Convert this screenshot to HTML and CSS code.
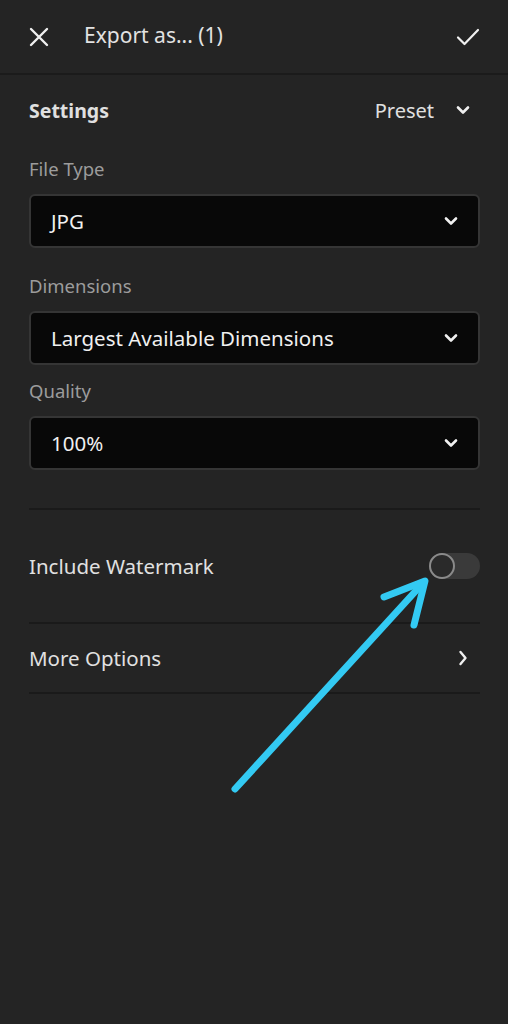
FILE: index.html
```html
<!DOCTYPE html>
<html>
<head>
<meta charset="utf-8">
<link rel="stylesheet" href="styles.css">
</head>
<body>
<div class="screen">
  <header class="topbar">
    <svg class="icon-close" width="20" height="20" viewBox="0 0 20 20"><path d="M2 2 L18 18 M18 2 L2 18" stroke="#f0f0f0" stroke-width="2.4" stroke-linecap="round"/></svg>
    <div class="title">Export as... (1)</div>
    <svg class="icon-check" width="24" height="18" viewBox="0 0 24 18"><path d="M2 9.5 L8.5 16 L22 2" fill="none" stroke="#f0f0f0" stroke-width="2.2" stroke-linecap="round" stroke-linejoin="round"/></svg>
  </header>
  <main class="content">
    <div class="section-head">
      <div class="section-title">Settings</div>
      <div class="preset">Preset
        <svg class="chev" width="14" height="10" viewBox="0 0 14 10"><path d="M2 2.5 L7 7.5 L12 2.5" fill="none" stroke="#f0f0f0" stroke-width="2.6" stroke-linecap="round" stroke-linejoin="round"/></svg>
      </div>
    </div>
    <div class="field field-type">
      <div class="label">File Type</div>
      <div class="select"><span>JPG</span>
        <svg class="chev" width="14" height="10" viewBox="0 0 14 10"><path d="M2 2.5 L7 7.5 L12 2.5" fill="none" stroke="#f0f0f0" stroke-width="2.6" stroke-linecap="round" stroke-linejoin="round"/></svg>
      </div>
    </div>
    <div class="field field-dim">
      <div class="label">Dimensions</div>
      <div class="select"><span>Largest Available Dimensions</span>
        <svg class="chev" width="14" height="10" viewBox="0 0 14 10"><path d="M2 2.5 L7 7.5 L12 2.5" fill="none" stroke="#f0f0f0" stroke-width="2.6" stroke-linecap="round" stroke-linejoin="round"/></svg>
      </div>
    </div>
    <div class="field field-quality">
      <div class="label">Quality</div>
      <div class="select"><span>100%</span>
        <svg class="chev" width="14" height="10" viewBox="0 0 14 10"><path d="M2 2.5 L7 7.5 L12 2.5" fill="none" stroke="#f0f0f0" stroke-width="2.6" stroke-linecap="round" stroke-linejoin="round"/></svg>
      </div>
    </div>
    <div class="rows">
      <div class="row watermark">
        <span>Include Watermark</span>
        <div class="toggle"><div class="knob"></div></div>
      </div>
      <div class="row more">
        <span>More Options</span>
        <svg width="10" height="16" viewBox="0 0 10 16"><path d="M2.5 2 L7.5 8 L2.5 14" fill="none" stroke="#f0f0f0" stroke-width="2.4" stroke-linecap="round" stroke-linejoin="round"/></svg>
      </div>
    </div>
  </main>
  <svg class="annotation" width="508" height="1024" viewBox="0 0 508 1024">
    <g fill="none" stroke="#33caf3" stroke-width="7" stroke-linecap="round" stroke-linejoin="round">
      <path d="M235 789 L423 583"/>
      <path d="M384 597 L425 581 L414 625"/>
    </g>
  </svg>
</div>
</body>
</html>
```
FILE: styles.css
```css
* { box-sizing: border-box; }
html, body { margin: 0; padding: 0; }
body {
  background: #242424;
  font-family: "Noto Sans", "Open Sans", sans-serif;
  color: #e8e8e8;
}
.screen {
  position: relative;
  width: 508px;
  height: 1024px;
  overflow: hidden;
  background: #242424;
}
.topbar {
  height: 75px;
  display: flex;
  align-items: center;
  padding: 0 28px 0 29px;
  border-bottom: 2px solid #1b1b1b;
}
.icon-close { flex: none; }
.title {
  margin-left: 35px;
  font-size: 21px;
  color: #e2e2e2;
  flex: 1;
  padding-bottom: 3px;
}
.icon-check { flex: none; }
.content {
  padding: 0 28px 0 29px;
}
.section-head {
  height: 70px;
  display: flex;
  align-items: center;
  justify-content: space-between;
}
.section-title {
  font-size: 19.5px;
  font-weight: 700;
  color: #e0e0e0;
}
.preset {
  display: flex;
  align-items: center;
  gap: 22px;
  font-size: 20px;
  color: #e0e0e0;
  padding-right: 10px;
}
.field { display: flex; flex-direction: column; }
.label {
  font-size: 18.5px;
  color: #9c9c9c;
  height: 49px;
  line-height: 24px;
  padding-top: 12px;
}
.select {
  height: 54px;
  background: #080808;
  border: 2px solid #353535;
  border-radius: 6px;
  display: flex;
  align-items: center;
  justify-content: space-between;
  padding: 0 20px 0 20px;
  font-size: 20.5px;
  color: #f0f0f0;
}
.field-type .select { margin-bottom: 14px; }
.field-dim .select { margin-bottom: 2px; }
.rows {
  margin-top: 38px;
  border-top: 2px solid #1a1a1a;
}
.row {
  display: flex;
  align-items: center;
  justify-content: space-between;
  font-size: 20.5px;
  color: #e0e0e0;
  border-bottom: 2px solid #1a1a1a;
}
.row.watermark { height: 114px; }
.row.more { height: 70px; padding-right: 12px; }
.toggle {
  width: 51px;
  height: 26px;
  border-radius: 13px;
  background: #3a3a3a;
  position: relative;
}
.knob {
  position: absolute;
  left: 0;
  top: 0;
  width: 26px;
  height: 26px;
  border-radius: 50%;
  border: 2.5px solid #8a8a8a;
  background: #2a2a2a;
}
.annotation {
  position: absolute;
  left: 0;
  top: 0;
  pointer-events: none;
}
```
